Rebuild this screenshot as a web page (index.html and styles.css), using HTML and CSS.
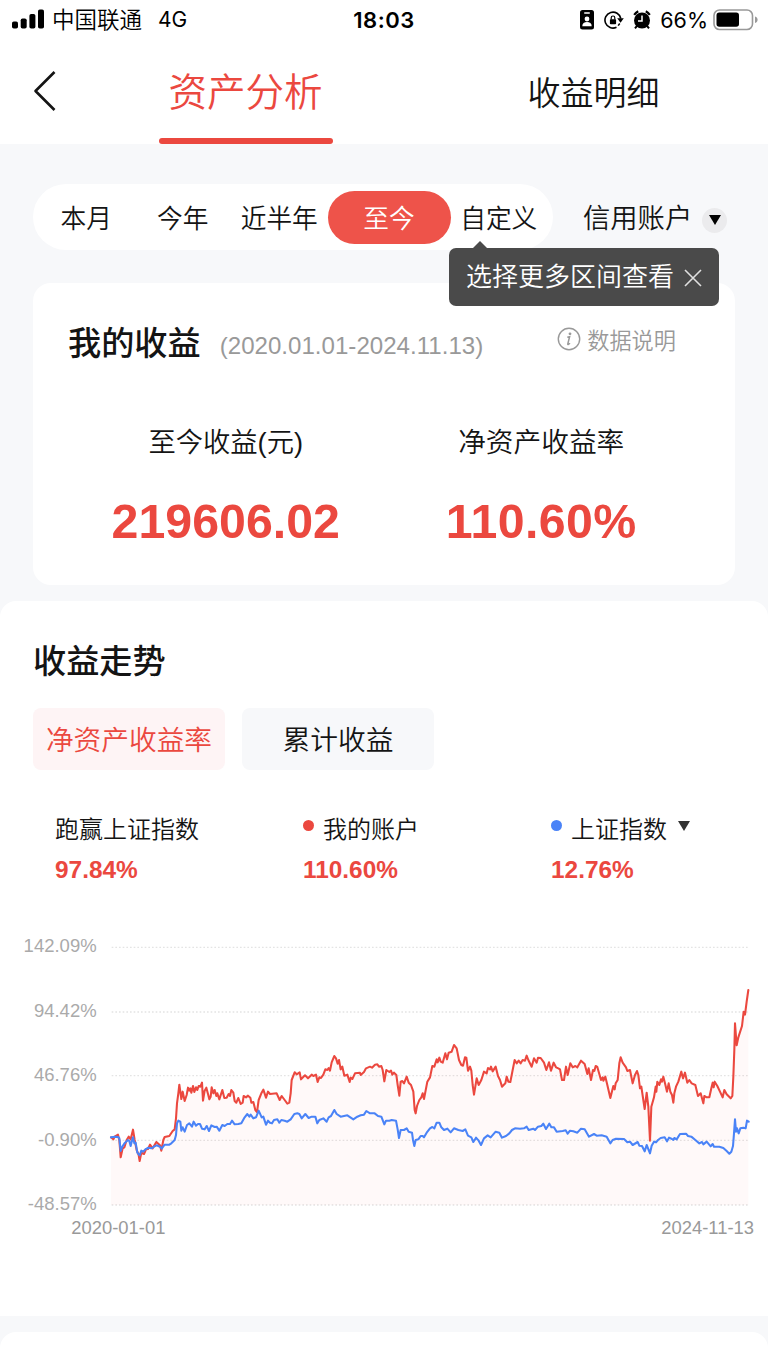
FILE: index.html
```html
<!DOCTYPE html>
<html lang="zh-CN">
<head>
    <meta charset="UTF-8">
    <meta name="viewport" content="width=device-width, initial-scale=1.0">
    <title>资产分析</title>
    <link rel="stylesheet" href="styles.css">
</head>
<body>
<div class="status-bar">
    <div class="status-left">
        <svg class="signal" width="33" height="20" viewBox="0 0 33 20">
            <rect x="0" y="12.5" width="6" height="7" rx="1.8"/>
            <rect x="8.7" y="9.5" width="6" height="10" rx="1.8"/>
            <rect x="17.4" y="5" width="6" height="14.5" rx="1.8"/>
            <rect x="26" y="0.5" width="6" height="19" rx="1.8"/>
        </svg>
        <span class="carrier">中国联通</span>
        <span class="network">4G</span>
    </div>
    <div class="clock">18:03</div>
    <div class="status-right">
        <svg class="id-icon" width="14" height="20" viewBox="0 0 14 20">
            <rect width="14" height="19.5" rx="2.5"/>
            <rect x="4" y="2.2" width="6" height="1.6" rx=".8" fill="#fff"/>
            <circle cx="7" cy="9" r="2.4" fill="#fff"/>
            <path d="M2.3 16.2c0-3 2-4.2 4.7-4.2s4.7 1.2 4.7 4.2z" fill="#fff"/>
        </svg>
        <svg class="lock-icon" width="20" height="20" viewBox="0 0 20 20">
            <path d="M12.5 17.3A8 8 0 1 1 16.8 8.5" fill="none" stroke="#000" stroke-width="1.6"/>
            <path d="M13.2 8.3h6.6l-3.3 4.5z"/>
            <path d="M15.7 13.5l-1.5 2.2" stroke="#000" stroke-width="1.5"/>
            <rect x="5.9" y="9.2" width="6.2" height="5" rx=".8"/>
            <path d="M7.2 9.5V7.8a1.8 1.8 0 0 1 3.6 0v1.7" fill="none" stroke="#000" stroke-width="1.2"/>
        </svg>
        <svg class="alarm-icon" width="18" height="20" viewBox="0 0 18 20">
            <circle cx="9" cy="10.5" r="8"/>
            <path d="M1.2 4.8a12 12 0 0 1 4-3.6M16.8 4.8a12 12 0 0 0-4-3.6" fill="none" stroke="#000" stroke-width="2.2"/>
            <path d="M4 15.8l-2 2.5M14 15.8l2 2.5" stroke="#000" stroke-width="2"/>
            <path d="M9 5.5v5.5H5" fill="none" stroke="#fff" stroke-width="1.5"/>
        </svg>
        <span class="percent">66%</span>
        <svg class="battery" width="46" height="22" viewBox="0 0 46 22">
            <rect x="1" y="1" width="38.5" height="19.5" rx="5.5" fill="none" stroke="#999" stroke-width="1.6"/>
            <rect x="3.5" y="3.6" width="22.5" height="14.2" rx="2.8"/>
            <path d="M42 7.5c1.8.5 2.6 1.8 2.6 3.3s-.8 2.8-2.6 3.3z" fill="#999"/>
        </svg>
    </div>
</div>

<div class="header">
    <a class="back" href="#">
        <svg width="24" height="42" viewBox="0 0 24 42">
            <path d="M21.5 2L2.5 21l19 19" fill="none" stroke="#141414" stroke-width="2.6" stroke-linejoin="round"/>
        </svg>
    </a>
    <a class="tab tab-active" href="#">资产分析</a>
    <a class="tab" href="#">收益明细</a>
</div>

<div class="filter">
    <div class="ranges">
        <span class="range">本月</span>
        <span class="range">今年</span>
        <span class="range">近半年</span>
        <span class="range range-active">至今</span>
        <span class="range">自定义
            <div class="tooltip">
                <span>选择更多区间查看</span>
                <svg width="20" height="20" viewBox="0 0 20 20">
                    <path d="M2 2l16 16M18 2L2 18" stroke="#e0e0e0" stroke-width="1.6"/>
                </svg>
            </div>
        </span>
    </div>
    <div class="account">
        <span>信用账户</span>
        <div class="account-arrow">
            <svg width="12" height="10" viewBox="0 0 12 10"><path d="M0 0h12L6 10z"/></svg>
        </div>
    </div>
</div>

<div class="card">
    <div class="card-head">
        <h2>我的收益</h2>
        <span class="period">(2020.01.01-2024.11.13)</span>
        <span class="note">
            <svg width="24" height="24" viewBox="0 0 24 24">
                <circle cx="12" cy="12" r="10.7" fill="none" stroke="#999" stroke-width="1.4"/>
                <circle cx="13" cy="6.8" r="1.4" fill="#999"/>
                <path d="M10.3 10.3l2.3-.6-1.8 7.2c-.2.9.8.7 2.2-.6" fill="none" stroke="#999" stroke-width="1.5"/>
            </svg>
            数据说明
        </span>
    </div>
    <div class="totals">
        <div class="total">
            <p class="total-amount">至今收益(元)</p>
            <strong>219606.02</strong>
        </div>
        <div class="total">
            <p>净资产收益率</p>
            <strong class="rate">110.60%</strong>
        </div>
    </div>
</div>

<div class="trend">
    <h2>收益走势</h2>
    <div class="switch">
        <span class="switch-item switch-active">净资产收益率</span>
        <span class="switch-item">累计收益</span>
    </div>
    <div class="legend">
        <div class="legend-item">
            <p>跑赢上证指数</p>
            <strong>97.84%</strong>
        </div>
        <div class="legend-item">
            <p><i class="dot dot-red"></i>我的账户</p>
            <strong>110.60%</strong>
        </div>
        <div class="legend-item">
            <p><i class="dot dot-blue"></i>上证指数
                <svg class="legend-arrow" width="12" height="10" viewBox="0 0 12 10"><path d="M0 0h12L6 10z" fill="#333"/></svg>
            </p>
            <strong>12.76%</strong>
        </div>
    </div>
    <!-- 3 viewBox units = 1px -->
    <svg class="chart" width="768" height="320" viewBox="0 2790 2304 960">
        <g class="grid">
            <path d="M335 2842H2247"/>
            <path d="M335 3036H2247"/>
            <path d="M335 3227H2247"/>
            <path d="M335 3421H2247"/>
            <path d="M335 3615H2247"/>
        </g>
        <path class="area" id="area"/>
        <polyline class="line line-red" id="mine" points="333,3412 340,3418 344,3410 354,3404 358,3420 362,3472 368,3445 373,3442 380,3420 386,3410 392,3418 399,3389 404,3420 410,3450 416,3465 419,3483 424,3458 432,3462 438,3448 444,3447 450,3434 458,3445 469,3426 480,3436 484,3452 490,3420 494,3411 508,3408 518,3393 524,3388 528,3355 531,3310 535,3280 538,3254 544,3297 548,3275 554,3303 560,3285 564,3263 568,3272 571,3265 574,3278 579,3258 583,3276 588,3262 592,3270 596,3258 601,3260 606,3248 609,3302 614,3272 619,3263 624,3282 628,3298 632,3290 635,3262 640,3280 644,3270 649,3288 652,3280 658,3298 667,3270 673,3294 680,3293 686,3282 690,3288 694,3270 700,3278 704,3303 709,3308 715,3294 722,3312 728,3308 731,3288 738,3292 744,3287 751,3293 754,3308 760,3306 766,3330 771,3336 776,3300 784,3280 790,3269 798,3293 804,3275 810,3282 830,3280 839,3300 845,3288 854,3300 862,3311 868,3308 872,3280 875,3240 884,3217 890,3223 899,3217 903,3238 915,3226 924,3235 935,3224 940,3228 948,3224 953,3246 958,3232 963,3234 970,3224 976,3208 982,3210 986,3204 990,3212 995,3187 1003,3168 1008,3175 1013,3191 1017,3180 1022,3208 1027,3200 1033,3227 1042,3224 1049,3246 1052,3233 1057,3237 1065,3220 1080,3218 1082,3225 1092,3216 1098,3205 1110,3200 1116,3203 1125,3194 1132,3193 1137,3200 1144,3198 1148,3210 1153,3244 1159,3210 1168,3216 1173,3212 1177,3224 1182,3218 1189,3225 1193,3255 1198,3287 1202,3245 1207,3243 1212,3250 1220,3230 1226,3248 1233,3255 1240,3275 1244,3330 1247,3340 1251,3318 1258,3300 1264,3292 1268,3280 1272,3297 1282,3245 1290,3232 1297,3198 1303,3200 1310,3178 1313,3187 1318,3173 1322,3185 1328,3188 1336,3160 1341,3178 1346,3158 1355,3155 1362,3135 1370,3145 1377,3180 1384,3195 1389,3197 1395,3172 1399,3173 1404,3212 1410,3200 1414,3212 1418,3255 1422,3284 1430,3235 1436,3255 1444,3240 1452,3215 1460,3220 1464,3204 1470,3208 1473,3200 1478,3214 1487,3200 1494,3228 1500,3240 1506,3260 1516,3250 1520,3230 1525,3245 1531,3246 1538,3210 1544,3180 1550,3190 1556,3182 1562,3190 1568,3180 1575,3182 1580,3167 1585,3180 1595,3200 1602,3175 1610,3188 1614,3173 1622,3174 1632,3188 1639,3210 1647,3187 1653,3212 1661,3188 1668,3202 1675,3205 1680,3208 1686,3240 1692,3240 1698,3200 1703,3225 1711,3190 1718,3202 1726,3198 1732,3202 1743,3182 1754,3192 1762,3222 1766,3205 1773,3240 1779,3210 1783,3213 1787,3198 1792,3201 1803,3240 1808,3232 1810,3242 1816,3230 1822,3255 1831,3294 1840,3258 1844,3268 1847,3250 1853,3240 1858,3190 1862,3172 1868,3188 1878,3202 1882,3213 1890,3210 1898,3250 1905,3225 1911,3213 1915,3225 1920,3265 1924,3260 1934,3327 1940,3278 1945,3320 1950,3422 1954,3320 1962,3292 1967,3260 1969,3275 1972,3245 1978,3255 1983,3238 1986,3245 1990,3230 1995,3250 2001,3275 2006,3250 2011,3275 2016,3285 2020,3308 2023,3280 2028,3260 2035,3245 2044,3215 2049,3235 2055,3218 2062,3248 2068,3240 2075,3250 2086,3255 2094,3288 2102,3280 2110,3310 2113,3288 2120,3292 2128,3292 2134,3265 2138,3248 2141,3262 2144,3245 2152,3258 2160,3275 2168,3292 2173,3270 2180,3283 2192,3295 2197,3288 2200,3230 2203,3150 2205,3070 2210,3136 2215,3112 2226,3078 2231,3035 2235,3044 2240,3005 2245,2970"/>
        <polyline class="line line-blue" points="333,3412 345,3410 354,3411 358,3415 362,3453 367,3440 375,3428 384,3420 388,3423 392,3438 397,3418 399,3412 403,3430 407,3428 412,3458 419,3466 424,3452 430,3455 436,3448 445,3443 455,3445 462,3440 470,3436 480,3440 485,3446 494,3434 508,3434 514,3430 524,3420 528,3405 531,3370 535,3362 541,3365 544,3392 548,3382 554,3395 561,3375 568,3370 576,3380 581,3365 588,3377 594,3372 600,3372 606,3386 614,3388 620,3378 627,3393 634,3376 644,3381 650,3380 658,3392 667,3375 674,3378 682,3372 690,3372 696,3362 704,3373 715,3372 724,3370 734,3352 742,3342 748,3350 752,3344 760,3355 768,3352 776,3332 785,3352 790,3350 798,3374 804,3362 810,3368 816,3370 822,3360 832,3358 838,3368 844,3360 854,3362 862,3365 872,3358 883,3342 892,3340 898,3342 905,3355 916,3342 926,3354 935,3350 946,3350 952,3370 958,3360 970,3355 980,3365 986,3352 993,3348 1003,3330 1010,3342 1022,3350 1042,3346 1060,3358 1072,3350 1082,3346 1092,3344 1099,3333 1110,3340 1124,3340 1134,3348 1144,3350 1153,3373 1158,3362 1168,3362 1175,3360 1188,3362 1193,3388 1197,3414 1202,3390 1212,3390 1220,3385 1226,3395 1236,3398 1239,3420 1243,3438 1247,3420 1255,3418 1262,3408 1268,3408 1272,3412 1280,3398 1290,3385 1297,3381 1303,3385 1310,3368 1318,3368 1324,3382 1332,3390 1342,3386 1352,3397 1362,3385 1375,3390 1388,3393 1396,3388 1404,3407 1414,3412 1420,3426 1428,3413 1436,3422 1443,3435 1452,3415 1463,3406 1472,3412 1487,3395 1498,3398 1506,3413 1518,3408 1528,3400 1536,3390 1545,3385 1560,3386 1572,3385 1580,3380 1586,3390 1600,3386 1605,3390 1614,3380 1624,3378 1630,3371 1638,3387 1648,3371 1654,3382 1662,3382 1670,3395 1688,3393 1697,3391 1703,3401 1710,3392 1720,3394 1732,3398 1743,3386 1754,3388 1767,3410 1782,3402 1790,3407 1805,3406 1820,3410 1831,3430 1838,3420 1848,3416 1872,3417 1882,3427 1890,3425 1898,3435 1913,3426 1918,3437 1926,3438 1934,3454 1940,3435 1950,3460 1955,3437 1962,3425 1968,3427 1974,3420 1982,3414 1994,3412 2001,3424 2007,3413 2016,3417 2020,3420 2023,3414 2030,3418 2040,3402 2058,3401 2064,3408 2074,3410 2086,3420 2098,3430 2106,3426 2110,3433 2120,3425 2132,3439 2138,3432 2142,3440 2158,3440 2170,3444 2180,3453 2188,3461 2194,3455 2199,3438 2202,3400 2205,3358 2208,3395 2211,3385 2216,3400 2221,3385 2230,3383 2237,3385 2241,3362 2246,3365"/>
        <g class="axis-y">
            <text x="290" y="2857">142.09%</text>
            <text x="290" y="3050">94.42%</text>
            <text x="290" y="3243">46.76%</text>
            <text x="290" y="3437">-0.90%</text>
            <text x="290" y="3630">-48.57%</text>
        </g>
        <g class="axis-x">
            <text x="214" y="3702">2020-01-01</text>
            <text x="1984" y="3702">2024-11-13</text>
        </g>
    </svg>
</div>

<div class="next-panel"></div>

<script>
    // fill under the account line
    const mine = document.getElementById('mine').getAttribute('points');
    document.getElementById('area').setAttribute('d', 'M333 3615L' + mine + 'V3615Z');
</script>
</body>
</html>
```
FILE: styles.css
```css
body {
    margin: 0;
    height: 1366px;
    overflow: hidden;
    background: #f7f8fa;
    color: #141414;
    font-family: "Liberation Sans", "Noto Sans CJK SC", sans-serif;
    font-weight: 350;
}

h2, p {
    margin: 0;
}

a {
    color: inherit;
    text-decoration: none;
}

svg {
    display: block;
    flex-shrink: 0;
}

.status-bar {
    height: 40px;
    background: #fff;
    color: #000;
    display: grid;
    grid-template-columns: 1fr auto 1fr;
    align-items: center;
    font-family: Inter, "Noto Sans CJK SC", sans-serif;
    font-size: 21.5px;
    font-weight: 400;
}

.status-left {
    display: flex;
    align-items: center;
    padding-left: 12px;
}

.signal {
    margin-top: -2px;
}

.carrier {
    margin: -4px 0 0 7px;
    font-size: 22.5px;
    font-weight: 350;
}

.network {
    margin: -1px 0 0 16px;
    font-size: 21px;
}

.clock {
    font-weight: 600;
    font-size: 22px;
    letter-spacing: 0.5px;
    margin-top: -1px;
}

.status-right {
    display: flex;
    align-items: center;
    justify-content: flex-end;
    padding-right: 9px;
    margin-top: -1px;
}

.lock-icon {
    margin-left: 10px;
}

.alarm-icon {
    margin-left: 9px;
}

.percent {
    margin: 0 5px 0 9px;
}

.header {
    height: 104px;
    background: #fff;
    display: flex;
}

.back {
    width: 125px;
    padding: 30px 0 0 33px;
}

.tab {
    height: 104px;
    line-height: 107px;
    font-size: 33px;
    margin-left: 195px;
}

.tab-active {
    width: 174px;
    height: 98px;
    margin-left: 0.5px;
    line-height: 106px;
    text-align: center;
    color: #eb483f;
    font-size: 38.5px;
    position: relative;
}

.tab-active::after {
    content: "";
    position: absolute;
    left: 0;
    bottom: -5.5px;
    width: 174px;
    height: 6px;
    border-radius: 3px;
    background: #eb483f;
}

.filter {
    display: flex;
    align-items: center;
    padding: 40px 0 33px 33px;
}

.ranges {
    width: 515px;
    height: 66px;
    padding-left: 5px;
    border-radius: 33px;
    background: #fff;
    display: flex;
    align-items: center;
}

.range {
    width: 96.5px;
    height: 53px;
    line-height: 57px;
    text-align: center;
    font-size: 25.7px;
    position: relative;
}

.range-active {
    width: 123px;
    border-radius: 27px;
    background: #ee534a;
    color: #fff;
}

.tooltip {
    position: absolute;
    left: -1.5px;
    top: 57px;
    width: 270px;
    height: 58px;
    box-sizing: border-box;
    padding: 2px 0 0 17px;
    border-radius: 7px;
    background: #4a4a4a;
    color: #fff;
    display: flex;
    align-items: center;
    gap: 9px;
    font-size: 26px;
    white-space: nowrap;
}

.tooltip::before {
    content: "";
    position: absolute;
    left: 23px;
    top: -7px;
    border: 8px solid transparent;
    border-top: 0;
    border-bottom: 8px solid #4a4a4a;
}

.account {
    margin: -2px 0 0 30px;
    display: flex;
    align-items: center;
    font-size: 27.3px;
}

.account-arrow {
    width: 25px;
    height: 25px;
    margin: 8px 0 0 10px;
    border-radius: 50%;
    background: #ebebed;
    display: flex;
    align-items: center;
    justify-content: center;
}

.card {
    width: 702px;
    height: 302px;
    margin-left: 33px;
    border-radius: 18px;
    background: #fff;
}

.card-head {
    display: flex;
    padding: 36px 0 0 35px;
    height: 48px;
    line-height: 48px;
}

h2 {
    font-size: 33.2px;
    font-weight: 500;
}

.card h2 {
    line-height: 49px;
}

.period {
    margin: 3px 0 0 19px;
    color: #999;
    font-size: 24.1px;
}

.note {
    margin-left: 74px;
    margin-top: -3px;
    display: flex;
    align-items: center;
    gap: 6px;
    color: #999;
    font-size: 22.2px;
}

.note svg {
    margin-top: -6px;
}

.totals {
    display: flex;
    padding: 50px 36px 0 35px;
}

.total {
    width: 316px;
    text-align: center;
}

.total p {
    font-size: 27.7px;
    line-height: 52px;
}

.total .total-amount {
    font-size: 27.3px;
}

.total strong {
    display: block;
    margin-top: 22px;
    line-height: 60px;
    font-size: 48.3px;
    font-weight: 700;
    color: #eb483f;
}

.total .rate {
    letter-spacing: 0.4px;
}

.trend {
    height: 715px;
    margin-top: 16px;
    border-radius: 16px 16px 0 0;
    background: #fff;
}

.trend h2 {
    padding: 36px 0 0 33px;
    line-height: 50px;
}

.switch {
    display: flex;
    gap: 17px;
    padding: 21px 0 0 33px;
}

.switch-item {
    width: 192px;
    height: 62px;
    line-height: 65px;
    border-radius: 8px;
    background: #f7f8fa;
    text-align: center;
    font-size: 27.7px;
}

.switch-active {
    background: #fef4f5;
    color: #eb483f;
}

.legend {
    display: grid;
    grid-template-columns: 248px 248px 1fr;
    padding: 36px 0 0 55px;
    height: 124px;
}

.legend-item p {
    display: flex;
    align-items: center;
    height: 42px;
    font-size: 24px;
}

.legend-item strong {
    display: block;
    margin-top: 2px;
    line-height: 40px;
    font-size: 24.4px;
    font-weight: 700;
    color: #eb483f;
}

.dot {
    width: 11px;
    height: 11px;
    margin: -4px 9px 0 0;
    border-radius: 50%;
}

.dot-red {
    background: #eb483f;
}

.dot-blue {
    background: #4a83f7;
}

.legend-arrow {
    margin: -2px 0 0 11px;
}

.grid path {
    stroke: #e4e4e4;
    stroke-width: 4;
    stroke-dasharray: 5 6;
}

.area {
    fill: #ff3c3c;
    fill-opacity: 0.03;
}

.line {
    fill: none;
    stroke-width: 6.2;
    stroke-linejoin: round;
    stroke-linecap: round;
}

.line-red {
    stroke: #eb483f;
}

.line-blue {
    stroke: #4a83f7;
}

.axis-y text {
    text-anchor: end;
    fill: #aaa;
    font-size: 55.5px;
}

.axis-x text {
    fill: #999;
    font-size: 55.2px;
}

.next-panel {
    height: 40px;
    margin-top: 16px;
    border-radius: 16px 16px 0 0;
    background: #fff;
}
```
